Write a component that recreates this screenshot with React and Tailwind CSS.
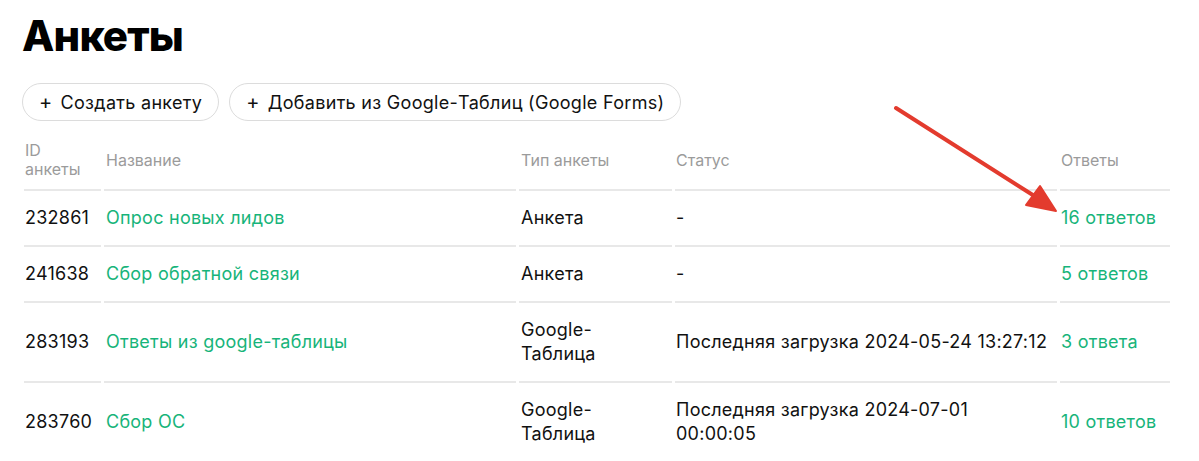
import React from "react";

const rows = [
  { id: "232861", name: "Опрос новых лидов", type: "Анкета", status: "-", answers: "16 ответов" },
  { id: "241638", name: "Сбор обратной связи", type: "Анкета", status: "-", answers: "5 ответов" },
  {
    id: "283193",
    name: "Ответы из google-таблицы",
    type: ["Google-", "Таблица"],
    status: ["Последняя загрузка 2024-05-24 13:27:12"],
    answers: "3 ответа",
  },
  {
    id: "283760",
    name: "Сбор ОС",
    type: ["Google-", "Таблица"],
    status: ["Последняя загрузка 2024-07-01", "00:00:05"],
    answers: "10 ответов",
  },
];

function Lines({ value }) {
  if (!Array.isArray(value)) return value;
  return value.map((line, i) => (
    <span key={i} className="block whitespace-nowrap">
      {line}
    </span>
  ));
}

export default function App() {
  return (
    <div
      className="relative min-h-screen bg-white text-[#111] px-[22px] pt-[12px] overflow-hidden"
      style={{ fontFamily: "Inter, 'Noto Sans', sans-serif" }}
    >
      <h1 className="text-[42px] leading-[48px] font-extrabold tracking-[-0.8px] text-black">Анкеты</h1>

      {/* Actions */}
      <div className="mt-[23px] flex gap-[10px] tracking-[0.3px]">
        <button className="h-[38px] px-[16px] rounded-full border border-[#dcdcdc] text-[18px] flex items-center gap-[8px]">
          <span className="text-[20px] leading-none">+</span>
          Создать анкету
        </button>
        <button className="h-[38px] px-[16px] rounded-full border border-[#dcdcdc] text-[18px] flex items-center gap-[8px]">
          <span className="text-[20px] leading-none">+</span>
          Добавить из Google-Таблиц (Google Forms)
        </button>
      </div>

      {/* Table */}
      <table className="mt-[20px] table-fixed border-separate border-spacing-x-[3px] border-spacing-y-0 w-[1152px] -ml-[1px]">
        <colgroup>
          <col className="w-[77px]" />
          <col className="w-[412px]" />
          <col className="w-[153px]" />
          <col className="w-[382px]" />
          <col className="w-[110px]" />
        </colgroup>
        <thead>
          <tr className="text-[16px] leading-[19px] text-[#9b9b9b] text-left align-middle">
            <th className="font-normal pl-[1px] pb-[10px] border-b-2 border-[#e8e8e8]">
              ID
              <br />
              анкеты
            </th>
            <th className="font-normal pl-[2px] pb-[10px] border-b-2 border-[#e8e8e8]">Название</th>
            <th className="font-normal pl-[2px] pb-[10px] border-b-2 border-[#e8e8e8]">Тип анкеты</th>
            <th className="font-normal pl-[1px] pb-[10px] border-b-2 border-[#e8e8e8]">Статус</th>
            <th className="font-normal pl-[1px] pb-[10px] border-b-2 border-[#e8e8e8]">Ответы</th>
          </tr>
        </thead>
        <tbody>
          {rows.map((row) => (
            <tr key={row.id} className="text-[18px] leading-[24px] tracking-[0.25px] align-middle">
              <td className="pl-[1px] py-[15px] border-b-2 border-[#e8e8e8]">{row.id}</td>
              <td className="pl-[2px] py-[15px] border-b-2 border-[#e8e8e8] text-[#17b47a]">{row.name}</td>
              <td className="pl-[2px] py-[15px] border-b-2 border-[#e8e8e8]">
                <Lines value={row.type} />
              </td>
              <td className="pl-[1px] py-[15px] border-b-2 border-[#e8e8e8]">
                <Lines value={row.status} />
              </td>
              <td className="pl-[1px] py-[15px] border-b-2 border-[#e8e8e8] text-[#17b47a] whitespace-nowrap">
                {row.answers}
              </td>
            </tr>
          ))}
        </tbody>
      </table>

      {/* Annotation arrow */}
      <svg className="absolute left-0 top-0 pointer-events-none" width="1199" height="461" viewBox="0 0 1199 461">
        <line x1="896" y1="108" x2="1036" y2="197" stroke="#e33b2e" strokeWidth="4" strokeLinecap="round" />
        <polygon points="1026,205 1040,186 1056,211" fill="#e33b2e" stroke="#e33b2e" strokeWidth="2" strokeLinejoin="round" />
      </svg>
    </div>
  );
}
